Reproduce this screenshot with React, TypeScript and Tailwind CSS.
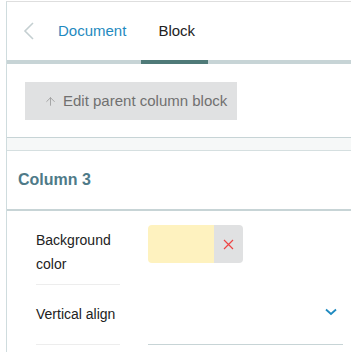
import { ArrowUp } from 'lucide-react';

export default function App() {
  return (
    <div className="w-[351px] h-[352px] overflow-hidden bg-white font-['Liberation_Sans',Arial,sans-serif]">
      <div className="mt-px border-t border-[#dedede] ml-[6px] border-l border-l-[#cfdcde] min-h-[351px]">
        {/* tabs */}
        <div className="flex items-stretch h-[58px]">
          <button className="w-[35px] flex items-center justify-start pl-[16px] text-[#c4cfd1]">
            <svg width="11" height="18" viewBox="0 0 11 18" fill="none">
              <path d="M10 1 L2 9 L10 17" stroke="currentColor" strokeWidth="1.6" />
            </svg>
          </button>
          <div className="px-4 flex items-center text-[15px] text-[#1f8ac0]">Document</div>
          <div className="px-4 flex items-center text-[15px] text-[#222]">Block</div>
        </div>
        <div className="h-[4px] bg-[#c7d4d6] flex">
          <div className="ml-[134px] w-[67px] bg-[#4f7a78]" />
        </div>

        {/* parent button */}
        <div className="border-b border-[#c7d4d6] pt-[18px] pb-[17px] pl-[18px]">
          <button className="h-[38px] w-[212px] bg-[#e0e1e2] flex items-center pl-[19px] text-[15px] text-[#707070]">
            <ArrowUp className="w-[13px] h-[13px] mr-[6px] text-[#999]" strokeWidth={1.5} />
            Edit parent column block
          </button>
        </div>
        <div className="h-[13px] bg-[#f6f8f8] border-b border-[#d5dfe0]" />

        {/* column panel */}
        <div>
          <div className="h-[60px] flex items-center pl-[11px] border-b-2 border-[#c7d4d6]">
            <h2 className="text-[16px] font-bold text-[#4e7a88]">Column 3</h2>
          </div>

          <div className="flex pl-[29px]">
            <div className="w-[84px] pt-[17px] pb-[8px] border-b border-[#ededed] text-[14px] leading-[24px] text-[#222]">
              Background
              <br />
              color
            </div>
            <div className="ml-[28px] pt-[14px]">
              <div className="flex h-[38px] rounded-[4px] overflow-hidden">
                <div className="w-[66px] bg-[#fef2bf]" />
                <button className="w-[29px] bg-[#e0e1e2] flex items-center justify-center text-[#ee4444]">
                  <svg width="11" height="11" viewBox="0 0 11 11">
                    <path d="M1 1 L10 10 M10 1 L1 10" stroke="currentColor" strokeWidth="1.2" />
                  </svg>
                </button>
              </div>
            </div>
          </div>

          <div className="flex pl-[29px]">
            <div className="w-[84px] h-[60px] flex items-center border-b border-[#ededed] text-[14px] text-[#222]">
              Vertical align
            </div>
            <div className="ml-[28px] w-[195px] h-[60px] flex items-center justify-end pr-[6px] border-b border-[#c7d4d6]">
              <svg width="12" height="8" viewBox="0 0 12 8" fill="none" className="text-[#1f8ac0] -mt-[5px]">
                <path d="M1 1.5 L6 6 L11 1.5" stroke="currentColor" strokeWidth="1.8" />
              </svg>
            </div>
          </div>
        </div>
      </div>
    </div>
  );
}
